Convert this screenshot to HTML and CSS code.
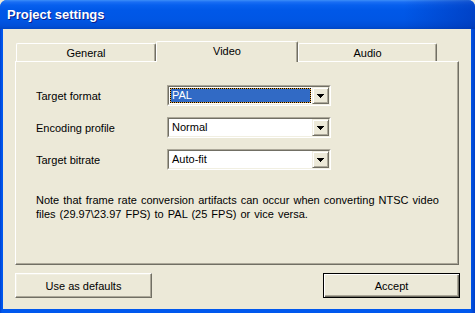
FILE: index.html
```html
<!doctype html>
<html>

<head>
    <meta charset="utf-8">
    <title>Project settings</title>
    <link rel="stylesheet" href="styles.css">
</head>

<body>
    <div class="window">
        <div class="titlebar">Project settings</div>
        <div class="client">
            <div class="tabs">
                <div class="tab">General</div>
                <div class="tab active">Video</div>
                <div class="tab">Audio</div>
            </div>
            <div class="panel">
                <div class="row">
                    <span class="label">Target format</span>
                    <div class="combo">
                        <div class="combo-in">
                            <div class="field"><span class="value selected">PAL</span></div>
                            <div class="drop">
                                <svg width="7" height="4" viewBox="0 0 7 4" shape-rendering="crispEdges"><path d="M0 0h7v1H0zM1 1h5v1H1zM2 2h3v1H2zM3 3h1v1H3z" fill="#000"/></svg>
                            </div>
                        </div>
                    </div>
                </div>
                <div class="row">
                    <span class="label">Encoding profile</span>
                    <div class="combo">
                        <div class="combo-in">
                            <div class="field"><span class="value">Normal</span></div>
                            <div class="drop">
                                <svg width="7" height="4" viewBox="0 0 7 4" shape-rendering="crispEdges"><path d="M0 0h7v1H0zM1 1h5v1H1zM2 2h3v1H2zM3 3h1v1H3z" fill="#000"/></svg>
                            </div>
                        </div>
                    </div>
                </div>
                <div class="row">
                    <span class="label">Target bitrate</span>
                    <div class="combo">
                        <div class="combo-in">
                            <div class="field"><span class="value">Auto-fit</span></div>
                            <div class="drop">
                                <svg width="7" height="4" viewBox="0 0 7 4" shape-rendering="crispEdges"><path d="M0 0h7v1H0zM1 1h5v1H1zM2 2h3v1H2zM3 3h1v1H3z" fill="#000"/></svg>
                            </div>
                        </div>
                    </div>
                </div>
                <p class="note">Note that frame rate conversion artifacts can occur when converting NTSC video<br>files (29.97\23.97 FPS) to PAL (25 FPS) or vice versa.</p>
            </div>
            <div class="buttons">
                <button class="btn">Use as defaults</button>
                <button class="btn default">Accept</button>
            </div>
        </div>
    </div>
</body>

</html>
```

FILE: styles.css
```css
* {
    margin: 0;
    padding: 0;
    box-sizing: border-box;
}

body {
    font: 11px "Liberation Sans", Arial, sans-serif;
    color: #000;
    background: #ece9d8;
}

.window {
    width: 475px;
    height: 313px;
    display: flex;
    flex-direction: column;
    background: linear-gradient(to right, #0041d0, #0058ee 2px, #0058ee 470px, #0040c8);
    border-radius: 7px 7px 0 0;
    overflow: hidden;
}

.titlebar {
    height: 29px;
    padding: 7px 0 0 7px;
    font: bold 13px/16px "Liberation Sans", Arial, sans-serif;
    color: #fff;
    text-shadow: 1px 1px #0a1e8c;
    background:
        linear-gradient(to right, rgba(0, 40, 160, 0) 85%, rgba(0, 40, 160, 0.45)),
        linear-gradient(to bottom, #3c8ef8 0, #1a6ef4 2px, #0760ee 5px, #0058e8 10px, #0056e4 20px, #004fd8 26px, #0046c4 29px);
}

.client {
    flex: 1;
    margin: 0 4px 4px 3px;
    padding: 12px 12px 0;
    background: #ece9d8;
}

/* tabs */
.tabs {
    display: flex;
    align-items: flex-end;
    height: 20px;
    padding-left: 1px;
}

.tab {
    width: 140px;
    height: 18px;
    padding-top: 1px;
    text-align: center;
    line-height: 17px;
    background: #ece9d8;
    border: 1px solid;
    border-color: #fff #716f64 transparent #fff;
    border-bottom: 0;
    border-radius: 2px 2px 0 0;
    box-shadow: inset -1px 0 #aca899;
}

.tab.active {
    width: 142px;
    height: 21px;
    padding-top: 0;
    line-height: 18px;
    margin-bottom: -1px;
    position: relative;
    z-index: 1;
}

.tab:last-child {
    width: 139px;
}

.panel {
    height: 204px;
    padding: 23px 20px 0;
    display: flex;
    flex-direction: column;
    gap: 11px;
    border: 1px solid;
    border-color: #fff #716f64 #716f64 #fff;
    box-shadow: inset -1px -1px #aca899;
}

.row {
    display: flex;
    align-items: center;
    height: 21px;
}

.label {
    width: 131px;
}

/* combo box */
.combo {
    width: 164px;
    height: 21px;
    border: 1px solid;
    border-color: #aca899 #fff #fff #aca899;
}

.combo-in {
    display: flex;
    height: 100%;
    background: #fff;
    border: 1px solid;
    border-color: #716f64 #f1efe2 #f1efe2 #716f64;
}

.field {
    flex: 1;
    padding: 1px;
}

.value {
    display: block;
    height: 15px;
    line-height: 13px;
    padding-left: 1px;
    border: 1px solid transparent;
}

.value.selected {
    color: #fff;
    border: 1px dotted #000;
    background: linear-gradient(#316ac5, #316ac5) padding-box, #e8a53c;
}

.drop {
    width: 17px;
    display: flex;
    align-items: center;
    justify-content: center;
    padding-top: 1px;
    background: #ece9d8;
    border: 1px solid;
    border-color: #f1efe2 #716f64 #716f64 #f1efe2;
    box-shadow: inset 1px 1px #fff, inset -1px -1px #aca899;
}

.drop svg {
    display: block;
}

.note {
    margin-top: 12px;
    line-height: 14px;
    word-spacing: 1px;
    white-space: nowrap;
}

/* bottom buttons */
.buttons {
    display: flex;
    justify-content: space-between;
    margin-top: 8px;
    margin-right: -1px;
}

.btn {
    width: 137px;
    height: 25px;
    font: 11px "Liberation Sans", Arial, sans-serif;
    color: #000;
    background: #ece9d8;
    border: 1px solid;
    border-color: #fff #716f64 #716f64 #fff;
    box-shadow: inset -1px -1px #aca899, inset 1px 1px #f1efe2;
}

.btn.default {
    border-color: #000;
    box-shadow: inset 1px 1px #fff, inset -1px -1px #716f64, inset -2px -2px #aca899;
}
```
